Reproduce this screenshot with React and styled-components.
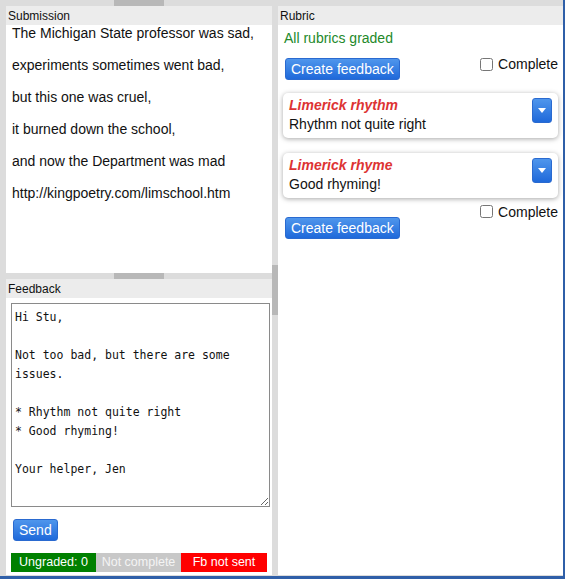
import React from "react";
import styled, { createGlobalStyle } from "styled-components";

const GlobalStyle = createGlobalStyle`
  html, body {
    margin: 0;
    padding: 0;
    background: #fff;
  }
  body {
    font-family: "Liberation Sans", Arial, sans-serif;
  }
`;

const poem = [
  "The Michigan State professor was sad,",
  "experiments sometimes went bad,",
  "but this one was cruel,",
  "it burned down the school,",
  "and now the Department was mad",
  "http://kingpoetry.com/limschool.htm",
];

const feedbackText = `Hi Stu,

Not too bad, but there are some issues.

* Rhythm not quite right
* Good rhyming!

Your helper, Jen`;

const rubrics = [
  { title: "Limerick rhythm", note: "Rhythm not quite right" },
  { title: "Limerick rhyme", note: "Good rhyming!" },
];

const App = () => {
  return (
    <>
      <GlobalStyle />
      <Frame>
        <LeftColumn>
          <HSplit>
            <Handle />
          </HSplit>
          <PanelHeader>Submission</PanelHeader>
          <SubmissionBody>
            {poem.map((line) => (
              <p key={line}>{line}</p>
            ))}
          </SubmissionBody>
          <HSplit>
            <Handle />
          </HSplit>
          <PanelHeader>Feedback</PanelHeader>
          <FeedbackBody>
            <FeedbackArea defaultValue={feedbackText} spellCheck={false} />
            <BlueButton $small>Send</BlueButton>
            <StatusBar>
              <Status $bg="#008000">Ungraded: 0</Status>
              <Status $bg="#c8c8c8" $color="#f4f4f4">
                Not complete
              </Status>
              <Status $bg="#ff0000">Fb not sent</Status>
            </StatusBar>
          </FeedbackBody>
        </LeftColumn>

        <VSplit>
          <VHandle />
        </VSplit>

        <RightColumn>
          <PanelHeader>Rubric</PanelHeader>
          <RubricBody>
            <Graded>All rubrics graded</Graded>
            <TopControls>
              <BlueButton>Create feedback</BlueButton>
              <CompleteLabel>
                <input type="checkbox" />
                <span>Complete</span>
              </CompleteLabel>
            </TopControls>
            {rubrics.map((r) => (
              <Card key={r.title}>
                <CardText>
                  <CardTitle>{r.title}</CardTitle>
                  <CardNote>{r.note}</CardNote>
                </CardText>
                <DropButton>
                  <svg width="8" height="6" viewBox="0 0 8 6">
                    <path d="M0 0 L8 0 L4 5 Z" fill="#fff" />
                  </svg>
                </DropButton>
              </Card>
            ))}
            <CompleteRow>
              <CompleteLabel>
                <input type="checkbox" />
                <span>Complete</span>
              </CompleteLabel>
            </CompleteRow>
            <BlueButton>Create feedback</BlueButton>
          </RubricBody>
        </RightColumn>
      </Frame>
    </>
  );
};

export default App;

const Frame = styled.div`
  width: 565px;
  height: 579px;
  box-sizing: border-box;
  display: flex;
  background: #dcdcdc;
  border-right: 2px solid #2f5fa8;
  border-bottom: 3px solid #2f5fa8;
  padding-bottom: 1px;
  overflow: hidden;
`;

const LeftColumn = styled.div`
  width: 266px;
  margin-left: 6px;
  display: flex;
  flex-direction: column;
`;

const HSplit = styled.div`
  height: 6px;
  flex: none;
  display: flex;
  justify-content: center;
  background: #dcdcdc;
`;

const Handle = styled.div`
  width: 50px;
  height: 100%;
  background: #b8b8b8;
`;

const VSplit = styled.div`
  width: 6px;
  flex: none;
  padding-top: 265px;
  box-sizing: border-box;
`;

const VHandle = styled.div`
  width: 6px;
  height: 50px;
  background: #b8b8b8;
`;

const PanelHeader = styled.div`
  height: 19px;
  flex: none;
  background: #ececec;
  font-size: 12px;
  line-height: 21px;
  padding-left: 2px;
  color: #111;
`;

const SubmissionBody = styled.div`
  height: 248px;
  flex: none;
  background: #fff;
  padding-left: 6px;
  box-sizing: border-box;
  font-size: 14px;
  color: #111;

  p {
    margin: 0 0 16px;
    line-height: 16px;
  }
`;

const FeedbackBody = styled.div`
  flex: 1;
  background: #fff;
  padding: 5px 2px 0 5px;
  display: flex;
  flex-direction: column;
  align-items: flex-start;
`;

const FeedbackArea = styled.textarea`
  width: 259px;
  height: 204px;
  box-sizing: border-box;
  border: 1px solid #8a8a8a;
  padding: 4px 3px 2px;
  margin: 0 0 12px;
  font-family: "DejaVu Sans Mono", Consolas, monospace;
  font-size: 11.5px;
  line-height: 19px;
  color: #111;
  resize: vertical;
  outline: none;
`;

const BlueButton = styled.button`
  height: 22px;
  padding: 0 5px;
  margin-left: ${(p) => (p.$small ? "2px" : "0")};
  border: 1px solid #2a6ad0;
  border-radius: 3px;
  background: linear-gradient(#4f96ec, #1f69da);
  color: #fff;
  font-family: "Liberation Sans", Arial, sans-serif;
  font-size: 14px;
  line-height: 20px;
  cursor: pointer;
`;

const StatusBar = styled.div`
  margin-top: 12px;
  width: 256px;
  display: grid;
  grid-template-columns: 85px 85px 86px;
`;

const Status = styled.div`
  height: 19px;
  background: ${(p) => p.$bg};
  color: ${(p) => p.$color || "#fff"};
  font-size: 12.5px;
  line-height: 19px;
  text-align: center;
`;

const RightColumn = styled.div`
  width: 285px;
  padding-top: 6px;
  display: flex;
  flex-direction: column;
`;

const RubricBody = styled.div`
  flex: 1;
  background: #fff;
  padding: 5px 5px 0;
  display: flex;
  flex-direction: column;
  align-items: flex-start;
`;

const Graded = styled.div`
  color: #23892a;
  font-size: 14px;
  line-height: 16px;
  padding-left: 1px;
`;

const TopControls = styled.div`
  align-self: stretch;
  display: flex;
  justify-content: space-between;
  align-items: flex-start;
  margin-top: 10px;
  padding-left: 2px;

  button {
    margin-top: 2px;
  }
`;

const CompleteLabel = styled.label`
  display: flex;
  align-items: center;
  font-size: 14px;
  color: #111;

  input {
    width: 13px;
    height: 13px;
    margin: 0 5px 0 0;
  }
`;

const Card = styled.div`
  align-self: stretch;
  display: flex;
  align-items: flex-start;
  margin-top: 13px;
  padding: 3px 6px 4px 6px;
  border-radius: 5px;
  background: #fff;
  box-shadow: 0 1px 5px rgba(0, 0, 0, 0.35);

  & + & {
    margin-top: 15px;
  }
`;

const CardText = styled.div`
  flex: 1;
  font-size: 14px;
  line-height: 19px;
`;

const CardTitle = styled.div`
  color: #dd3333;
  font-weight: bold;
  font-style: italic;
`;

const CardNote = styled.div`
  color: #111;
`;

const DropButton = styled.div`
  width: 20px;
  height: 25px;
  margin-top: 2px;
  box-sizing: border-box;
  border: 1px solid #2a6ad0;
  border-radius: 3px;
  background: linear-gradient(#4f96ec, #1f69da);
  display: flex;
  align-items: center;
  justify-content: center;
`;

const CompleteRow = styled.div`
  align-self: stretch;
  display: flex;
  justify-content: flex-end;
  align-items: center;
  height: 11px;
  margin-top: 8px;

  & + button {
    margin-left: 2px;
  }
`;
